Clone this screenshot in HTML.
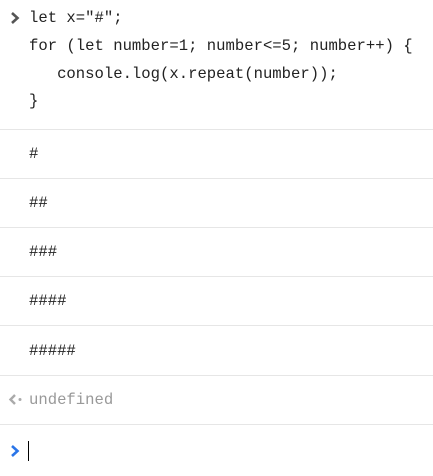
<html><head><style>
body{margin:0;width:433px;height:476px;background:#fff;position:relative;overflow:hidden;font-family:"Liberation Mono",monospace;font-size:15.6px;color:#222}
.t{position:absolute;left:29px;height:20px;line-height:20px;white-space:pre}
.s{position:absolute;left:0;width:433px;height:1px;background:#e6e6e6}
</style></head><body>
<svg style="position:absolute;left:9px;top:11px" width="12" height="14"><path d="M3 2L8.5 7L3 12" stroke="#555" stroke-width="2.6" fill="none"/></svg>
<div class="t" style="top:8px">let x="#";</div>
<div class="t" style="top:36px">for (let number=1; number&lt;=5; number++) {</div>
<div class="t" style="top:64px">   console.log(x.repeat(number));</div>
<div class="t" style="top:91px">}</div>
<div class="s" style="top:129px"></div>
<div class="t" style="top:144px">#</div>
<div class="s" style="top:178px"></div>
<div class="t" style="top:193px">##</div>
<div class="s" style="top:227px"></div>
<div class="t" style="top:242px">###</div>
<div class="s" style="top:276px"></div>
<div class="t" style="top:291px">####</div>
<div class="s" style="top:325px"></div>
<div class="t" style="top:341px">#####</div>
<div class="s" style="top:375px"></div>
<svg style="position:absolute;left:8px;top:393px" width="16" height="14"><path d="M7 2L2.5 6.5L7 11" stroke="#aaa" stroke-width="2.4" fill="none"/><circle cx="12" cy="6.5" r="1.5" fill="#aaa"/></svg>
<div class="t" style="top:390px;color:#999">undefined</div>
<div class="s" style="top:424px"></div>
<svg style="position:absolute;left:9px;top:444px" width="12" height="14"><path d="M3 2L8.5 7L3 12" stroke="#2a75e8" stroke-width="2.6" fill="none"/></svg>
<div style="position:absolute;left:28px;top:441px;width:1px;height:20px;background:#000"></div>
</body></html>
